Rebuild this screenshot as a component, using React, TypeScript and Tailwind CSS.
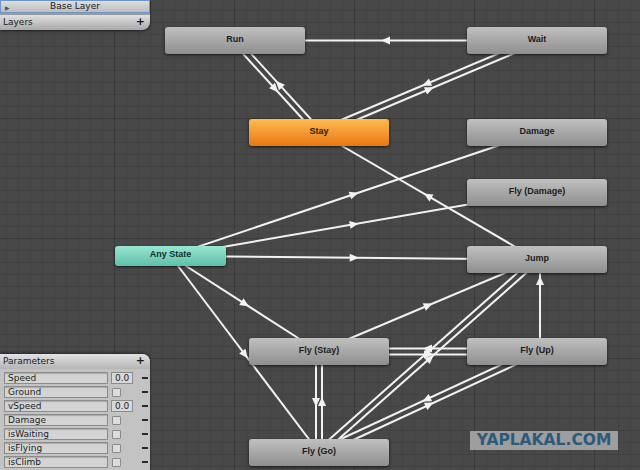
type Kind = 'gray' | 'orange' | 'teal'

type StateNode = {
  label: string
  x: number
  y: number
  w: number
  h: number
  kind: Kind
}

const nodes: Record<string, StateNode> = {
  run: { label: 'Run', x: 165, y: 27, w: 140, h: 27, kind: 'gray' },
  wait: { label: 'Wait', x: 467, y: 27, w: 140, h: 27, kind: 'gray' },
  stay: { label: 'Stay', x: 249, y: 119, w: 140, h: 27, kind: 'orange' },
  damage: { label: 'Damage', x: 467, y: 119, w: 140, h: 27, kind: 'gray' },
  flyDamage: { label: 'Fly (Damage)', x: 467, y: 179, w: 140, h: 27, kind: 'gray' },
  any: { label: 'Any State', x: 115, y: 246, w: 111, h: 20, kind: 'teal' },
  jump: { label: 'Jump', x: 467, y: 246, w: 140, h: 27, kind: 'gray' },
  flyStay: { label: 'Fly (Stay)', x: 249, y: 338, w: 140, h: 27, kind: 'gray' },
  flyUp: { label: 'Fly (Up)', x: 467, y: 338, w: 140, h: 27, kind: 'gray' },
  flyGo: { label: 'Fly (Go)', x: 249, y: 439, w: 140, h: 27, kind: 'gray' },
}

// [from, to, paired]
const transitions: [string, string, boolean][] = [
  ['wait', 'run', false],
  ['run', 'stay', true],
  ['stay', 'run', true],
  ['wait', 'stay', true],
  ['stay', 'wait', true],
  ['jump', 'stay', false],
  ['any', 'damage', false],
  ['any', 'flyDamage', false],
  ['any', 'jump', false],
  ['any', 'flyStay', false],
  ['any', 'flyGo', false],
  ['flyStay', 'flyUp', true],
  ['flyUp', 'flyStay', true],
  ['flyStay', 'flyGo', true],
  ['flyGo', 'flyStay', true],
  ['flyStay', 'jump', false],
  ['flyGo', 'jump', true],
  ['jump', 'flyGo', true],
  ['flyGo', 'flyUp', true],
  ['flyUp', 'flyGo', true],
]

const kindClass: Record<Kind, string> = {
  gray: 'bg-linear-to-b from-[#c0c0c0] to-[#8f8f8f] text-[#1c1c1c]',
  orange: 'bg-linear-to-b from-[#fdbb4e] to-[#e8770b] text-[#2a1a05]',
  teal: 'bg-linear-to-b from-[#98e6d4] to-[#5dbfa8] text-[#12302a]',
}

const center = (n: StateNode) => ({ x: n.x + n.w / 2, y: n.y + n.h / 2 })

function Arrow({ x1, y1, x2, y2, ax, ay }: { x1: number; y1: number; x2: number; y2: number; ax?: number; ay?: number }) {
  const len = Math.hypot(x2 - x1, y2 - y1)
  const dx = (x2 - x1) / len
  const dy = (y2 - y1) / len
  const mx = ax ?? (x1 + x2) / 2
  const my = ay ?? (y1 + y2) / 2
  const tip = `${mx + dx * 5},${my + dy * 5}`
  const b1 = `${mx - dx * 4 - dy * 4},${my - dy * 4 + dx * 4}`
  const b2 = `${mx - dx * 4 + dy * 4},${my - dy * 4 - dx * 4}`
  return (
    <g>
      <line x1={x1} y1={y1} x2={x2} y2={y2} stroke="#f2f2f2" strokeWidth={2} />
      <polygon points={`${tip} ${b1} ${b2}`} fill="#f2f2f2" />
    </g>
  )
}

function Transitions() {
  return (
    <svg className="absolute inset-0" width={640} height={470}>
      {transitions.map(([from, to, paired], i) => {
        const a = center(nodes[from])
        const b = center(nodes[to])
        const len = Math.hypot(b.x - a.x, b.y - a.y)
        const px = paired ? (-(b.y - a.y) / len) * 3 : 0
        const py = paired ? ((b.x - a.x) / len) * 3 : 0
        return <Arrow key={i} x1={a.x + px} y1={a.y + py} x2={b.x + px} y2={b.y + py} />
      })}
      <Arrow x1={540} y1={352} x2={540} y2={259} ax={540} ay={281} />
    </svg>
  )
}

function Node({ n }: { n: StateNode }) {
  return (
    <div
      className={`absolute flex items-center justify-center rounded-[3px] shadow-[0_1px_3px_rgba(0,0,0,0.7)] font-['Liberation_Sans',sans-serif] font-bold text-[9px] pb-[2px] ${kindClass[n.kind]}`}
      style={{ left: n.x, top: n.y, width: n.w, height: n.h }}
    >
      {n.label}
    </div>
  )
}

const params: { name: string; value?: string }[] = [
  { name: 'Speed', value: '0.0' },
  { name: 'Ground' },
  { name: 'vSpeed', value: '0.0' },
  { name: 'Damage' },
  { name: 'isWaiting' },
  { name: 'isFlying' },
  { name: 'isClimb' },
]

function ParamRow({ name, value }: { name: string; value?: string }) {
  return (
    <div className="flex items-center h-[14px] pl-1">
      <div className="w-[104px] h-[12px] bg-[#d4d4d4] border border-[#8c8c8c] shadow-[inset_0_1px_1px_rgba(0,0,0,0.2)] pl-[3px] leading-[10px] text-[9px] text-[#1e1e1e]">
        {name}
      </div>
      {value ? (
        <div className="ml-[3px] w-[22px] h-[12px] bg-[#d8d8d8] border border-[#8c8c8c] pl-[3px] leading-[10px] text-[9px] text-[#1e1e1e]">
          {value}
        </div>
      ) : (
        <div className="ml-[4px] mr-[12px] w-[9px] h-[9px] bg-[#dcdcdc] border border-[#8a8a8a] rounded-[1px]" />
      )}
      <div className="ml-[9px] w-[6px] h-[1.5px] bg-[#2a2a2a]" />
    </div>
  )
}

export default function App() {
  return (
    <div className="relative w-[640px] h-[470px] overflow-hidden bg-[#484848] font-['DejaVu_Sans',sans-serif] bg-[linear-gradient(to_right,#3a3a3a_1px,transparent_1px),linear-gradient(to_bottom,#3a3a3a_1px,transparent_1px),linear-gradient(to_right,#424242_1px,transparent_1px),linear-gradient(to_bottom,#424242_1px,transparent_1px)] [background-size:120px_120px,120px_120px,12px_12px,12px_12px] [background-position:-6px_-2px]">
      <Transitions />
      {Object.entries(nodes).map(([k, n]) => (
        <Node key={k} n={n} />
      ))}

      {/* layers panel */}
      <div className="absolute left-0 top-0 w-[150px] shadow-[0_1px_3px_rgba(0,0,0,0.6)] rounded-br-[8px]">
        <div className="relative h-[13px] bg-linear-to-b from-[#dedede] to-[#bdbdbd] border border-[#6d97cc] flex items-center justify-center text-[9px] text-[#1a1a1a]">
          <span className="absolute left-[4px] top-[2px] text-[6px] text-[#555]">▶</span>
          Base Layer
        </div>
        <div className="h-[2px] bg-[#9a9a9a]" />
        <div className="h-[15px] bg-linear-to-b from-[#e0e0e0] to-[#a9a9a9] rounded-br-[8px] flex items-center justify-between px-[3px] text-[9px] text-[#1a1a1a]">
          <span>Layers</span>
          <span className="text-[11px] font-bold mr-[2px]">+</span>
        </div>
      </div>

      {/* parameters panel */}
      <div className="absolute left-0 top-[354px] w-[150px] h-[116px] bg-[#c3c3c3] rounded-tr-[8px] shadow-[0_-1px_3px_rgba(0,0,0,0.5)]">
        <div className="h-[15px] bg-linear-to-b from-[#e2e2e2] to-[#b4b4b4] rounded-tr-[8px] flex items-center justify-between px-[3px] text-[9px] text-[#1a1a1a]">
          <span>Parameters</span>
          <span className="text-[11px] font-bold mr-[2px]">+</span>
        </div>
        <div className="pt-[2px]">
          {params.map((p) => (
            <ParamRow key={p.name} name={p.name} value={p.value} />
          ))}
        </div>
      </div>

      {/* watermark */}
      <div className="absolute left-[470px] top-[431px] w-[148px] h-[19px] bg-[#9e9e9e] flex items-center justify-center font-['DejaVu_Sans',sans-serif] font-bold text-[15.5px] text-[#2c5a7b] leading-none">
        YAPLAKAL.COM
      </div>
    </div>
  )
}
